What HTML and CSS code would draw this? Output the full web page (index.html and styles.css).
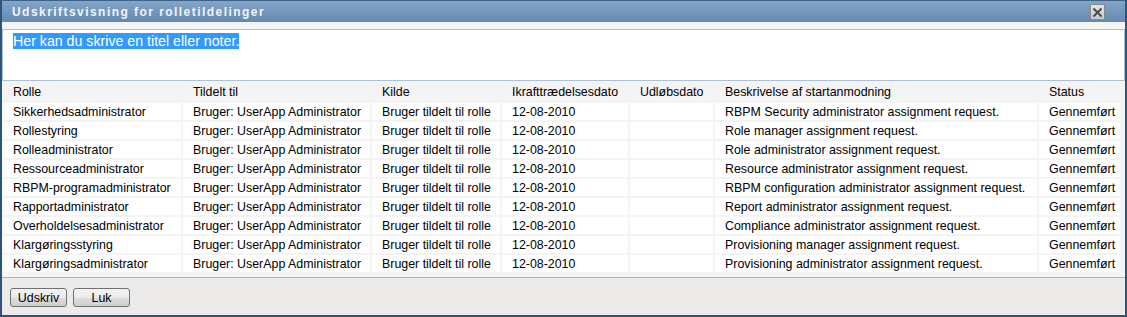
FILE: index.html
```html
<!DOCTYPE html>
<html lang="da">
<head>
    <meta charset="UTF-8">
    <meta name="viewport" content="width=device-width, initial-scale=1.0">
    <title>Udskriftsvisning for rolletildelinger</title>
    <link rel="stylesheet" href="styles.css">
</head>
<body>
    <div class="dialog">
        <div class="titlebar">
            <span class="title">Udskriftsvisning for rolletildelinger</span>
            <span class="close-btn">
                <svg width="11" height="11" viewBox="0 0 11 11">
                    <path d="M1.5 1.5 L9.5 9.5 M9.5 1.5 L1.5 9.5" stroke="#4a4a4a" stroke-width="2"/>
                </svg>
            </span>
        </div>

        <div class="notes-wrap">
            <div class="notes"><span class="selected">Her kan du skrive en titel eller noter.</span></div>
        </div>

        <div class="table-area">
            <div class="grid">
                <div class="head">Rolle</div>
                <div class="head">Tildelt til</div>
                <div class="head">Kilde</div>
                <div class="head">Ikrafttrædelsesdato</div>
                <div class="head">Udløbsdato</div>
                <div class="head">Beskrivelse af startanmodning</div>
                <div class="head">Status</div>

                <div class="cell">Sikkerhedsadministrator</div>
                <div class="cell">Bruger: UserApp Administrator</div>
                <div class="cell">Bruger tildelt til rolle</div>
                <div class="cell">12-08-2010</div>
                <div class="cell"></div>
                <div class="cell">RBPM Security administrator assignment request.</div>
                <div class="cell">Gennemført</div>

                <div class="cell">Rollestyring</div>
                <div class="cell">Bruger: UserApp Administrator</div>
                <div class="cell">Bruger tildelt til rolle</div>
                <div class="cell">12-08-2010</div>
                <div class="cell"></div>
                <div class="cell">Role manager assignment request.</div>
                <div class="cell">Gennemført</div>

                <div class="cell">Rolleadministrator</div>
                <div class="cell">Bruger: UserApp Administrator</div>
                <div class="cell">Bruger tildelt til rolle</div>
                <div class="cell">12-08-2010</div>
                <div class="cell"></div>
                <div class="cell">Role administrator assignment request.</div>
                <div class="cell">Gennemført</div>

                <div class="cell">Ressourceadministrator</div>
                <div class="cell">Bruger: UserApp Administrator</div>
                <div class="cell">Bruger tildelt til rolle</div>
                <div class="cell">12-08-2010</div>
                <div class="cell"></div>
                <div class="cell">Resource administrator assignment request.</div>
                <div class="cell">Gennemført</div>

                <div class="cell">RBPM-programadministrator</div>
                <div class="cell">Bruger: UserApp Administrator</div>
                <div class="cell">Bruger tildelt til rolle</div>
                <div class="cell">12-08-2010</div>
                <div class="cell"></div>
                <div class="cell">RBPM configuration administrator assignment request.</div>
                <div class="cell">Gennemført</div>

                <div class="cell">Rapportadministrator</div>
                <div class="cell">Bruger: UserApp Administrator</div>
                <div class="cell">Bruger tildelt til rolle</div>
                <div class="cell">12-08-2010</div>
                <div class="cell"></div>
                <div class="cell">Report administrator assignment request.</div>
                <div class="cell">Gennemført</div>

                <div class="cell">Overholdelsesadministrator</div>
                <div class="cell">Bruger: UserApp Administrator</div>
                <div class="cell">Bruger tildelt til rolle</div>
                <div class="cell">12-08-2010</div>
                <div class="cell"></div>
                <div class="cell">Compliance administrator assignment request.</div>
                <div class="cell">Gennemført</div>

                <div class="cell">Klargøringsstyring</div>
                <div class="cell">Bruger: UserApp Administrator</div>
                <div class="cell">Bruger tildelt til rolle</div>
                <div class="cell">12-08-2010</div>
                <div class="cell"></div>
                <div class="cell">Provisioning manager assignment request.</div>
                <div class="cell">Gennemført</div>

                <div class="cell">Klargøringsadministrator</div>
                <div class="cell">Bruger: UserApp Administrator</div>
                <div class="cell">Bruger tildelt til rolle</div>
                <div class="cell">12-08-2010</div>
                <div class="cell"></div>
                <div class="cell">Provisioning administrator assignment request.</div>
                <div class="cell">Gennemført</div>
            </div>
        </div>

        <div class="footer">
            <button type="button" class="btn">Udskriv</button>
            <button type="button" class="btn">Luk</button>
        </div>
    </div>
</body>
</html>
```

FILE: styles.css
```css
body {
    margin: 0;
    font-family: "Liberation Sans", Arial, sans-serif;
    font-size: 12.4px;
    color: #000;
    background: #fff;
}

.dialog {
    width: 1127px;
    height: 317px;
    box-sizing: border-box;
    border: 2px solid #2f5479;
    border-top: 1px solid #3d6389;
    background: #f4f4f4;
    display: flex;
    flex-direction: column;
}

.titlebar {
    height: 21px;
    flex: none;
    display: flex;
    align-items: center;
    justify-content: space-between;
    padding: 0 20px 0 10px;
    background: linear-gradient(to bottom, #84a5c8, #6489b1);
}

.title {
    color: #f0f4f8;
    font-weight: bold;
    font-size: 12px;
    letter-spacing: 1.45px;
}

.close-btn {
    width: 15px;
    height: 16px;
    box-sizing: border-box;
    border: 1px solid #8a8a8a;
    background: linear-gradient(to bottom, #e4e4e4, #c8c8c8);
    display: flex;
    align-items: center;
    justify-content: center;
    margin-top: 1px;
}

.notes-wrap {
    padding-top: 7px;
    flex: none;
}

.notes {
    height: 52px;
    box-sizing: border-box;
    border: 1px solid #a9c2da;
    background: #fff;
    padding: 3px 10px;
    font-size: 14.2px;
    line-height: 16px;
}

.selected {
    background: #3399ff;
    color: #fff;
}

.table-area {
    flex: 1;
    padding: 1px 0 0 1px;
    border-bottom: 1px solid #b5b5b5;
}

.grid {
    display: grid;
    grid-template-columns: 178px 187px 128px 126px 83px 322px 81px;
    grid-template-rows: 19px;
    grid-auto-rows: 17px;
    gap: 2px;
}

.head {
    padding: 1px 0 0 10px;
    line-height: 18px;
    color: #000;
}

.cell {
    background: #fff;
    padding: 2px 0 0 10px;
    line-height: 15px;
    white-space: nowrap;
    overflow: hidden;
}

.footer {
    height: 37px;
    flex: none;
    background: #ecebe9;
    display: flex;
    align-items: flex-start;
    gap: 6px;
    padding: 10px 0 0 8px;
    box-sizing: border-box;
}

.btn {
    width: 57px;
    height: 19px;
    padding: 0;
    border: 1px solid #707070;
    border-radius: 3px;
    background: linear-gradient(to bottom, #f2f2f2 0%, #ebebeb 50%, #dddddd 51%, #cfcfcf 100%);
    font-family: "Liberation Sans", Arial, sans-serif;
    font-size: 12.4px;
    color: #000;
}
```
